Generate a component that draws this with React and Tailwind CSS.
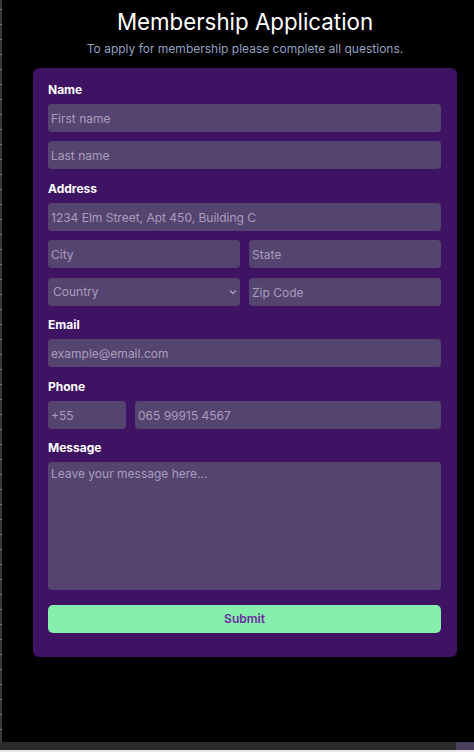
import React from 'react';

const fieldCls =
  'h-[28px] rounded-[4px] bg-[#554470] px-[3px] text-[12px] text-white placeholder:text-[#a99dbb] outline-none border-0';
const inputCls = `w-full ${fieldCls}`;

const Label = ({ children }) => (
  <label className="block h-[16px] mb-[6px] text-[12px] leading-[16px] font-bold text-white">
    {children}
  </label>
);

export default function App() {
  return (
    <div className="h-[752px] flex flex-col bg-black font-['Inter',sans-serif] overflow-hidden">
      <div className="flex flex-1 min-h-0">
        {/* left ruler strip */}
        <div className="w-[2px] bg-[repeating-linear-gradient(to_bottom,#3a3a3a_0px,#3a3a3a_9px,#7a7a7a_9px,#7a7a7a_10px,#3a3a3a_10px,#3a3a3a_15px)]" />
        <div className="flex-1 pl-[14px]">
          <div className="w-[424px] mx-auto">
            <h1 className="pt-[7px] text-center text-[22.3px] leading-[30px] text-white font-normal">
              Membership Application
            </h1>
            <p className="mt-[4px] text-center text-[12px] leading-[16px] text-[#93a1c0]">
              To apply for membership please complete all questions.
            </p>

            <form className="mt-[11px] rounded-[6px] bg-[#3e1363] pt-[14px] pb-[24px] pl-[15px] pr-[16px] flex flex-col">
              <Label>Name</Label>
              <input className={inputCls} placeholder="First name" />
              <input className={`${inputCls} mt-[9px]`} placeholder="Last name" />

              <div className="mt-[12px]">
                <Label>Address</Label>
                <input className={inputCls} placeholder="1234 Elm Street, Apt 450, Building C" />
                <div className="grid grid-cols-2 gap-[9px] mt-[9px]">
                  <input className={inputCls} placeholder="City" />
                  <input className={inputCls} placeholder="State" />
                </div>
                <div className="grid grid-cols-2 gap-[9px] mt-[10px]">
                  <div className="relative">
                    <select
                      defaultValue=""
                      className="w-full h-[28px] rounded-[4px] bg-[#554470] pl-[5px] text-[12px] text-[#a99dbb] outline-none appearance-none"
                    >
                      <option value="" disabled>Country</option>
                    </select>
                    <svg
                      className="absolute right-[3px] top-[11px] w-[8px] h-[6px] pointer-events-none"
                      viewBox="0 0 8 6"
                      fill="none"
                      stroke="#a99dbb"
                      strokeWidth="1.4"
                    >
                      <path d="M1 1.5l3 3 3-3" />
                    </svg>
                  </div>
                  <input className={inputCls} placeholder="Zip Code" />
                </div>
              </div>

              <div className="mt-[11px]">
                <Label>Email</Label>
                <input className={inputCls} placeholder="example@email.com" />
              </div>

              <div className="mt-[12px]">
                <Label>Phone</Label>
                <div className="flex gap-[9px]">
                  <input className={`${fieldCls} w-[78px] shrink-0`} placeholder="+55" />
                  <input className={`${fieldCls} flex-1 min-w-0`} placeholder="065 99915 4567" />
                </div>
              </div>

              <div className="mt-[11px]">
                <Label>Message</Label>
                <textarea
                  className="block w-full h-[128px] resize-none rounded-[4px] bg-[#554470] px-[3px] py-[4px] text-[12px] leading-[16px] text-white placeholder:text-[#a99dbb] outline-none"
                  placeholder="Leave your message here..."
                />
              </div>

              <button
                type="button"
                className="mt-[15px] h-[28px] w-full rounded-[5px] bg-[#86efad] text-[12px] font-semibold text-[#6b2aa0]"
              >
                Submit
              </button>
            </form>
          </div>
        </div>
      </div>
      {/* bottom window chrome */}
      <div className="flex h-[8px] shrink-0">
        <div className="flex-1 bg-[#2a2a2b]" />
        <div className="w-[18px] bg-[#4a3f5c]" />
      </div>
      <div className="h-[2px] shrink-0 bg-[#e6e7e8]" />
    </div>
  );
}
